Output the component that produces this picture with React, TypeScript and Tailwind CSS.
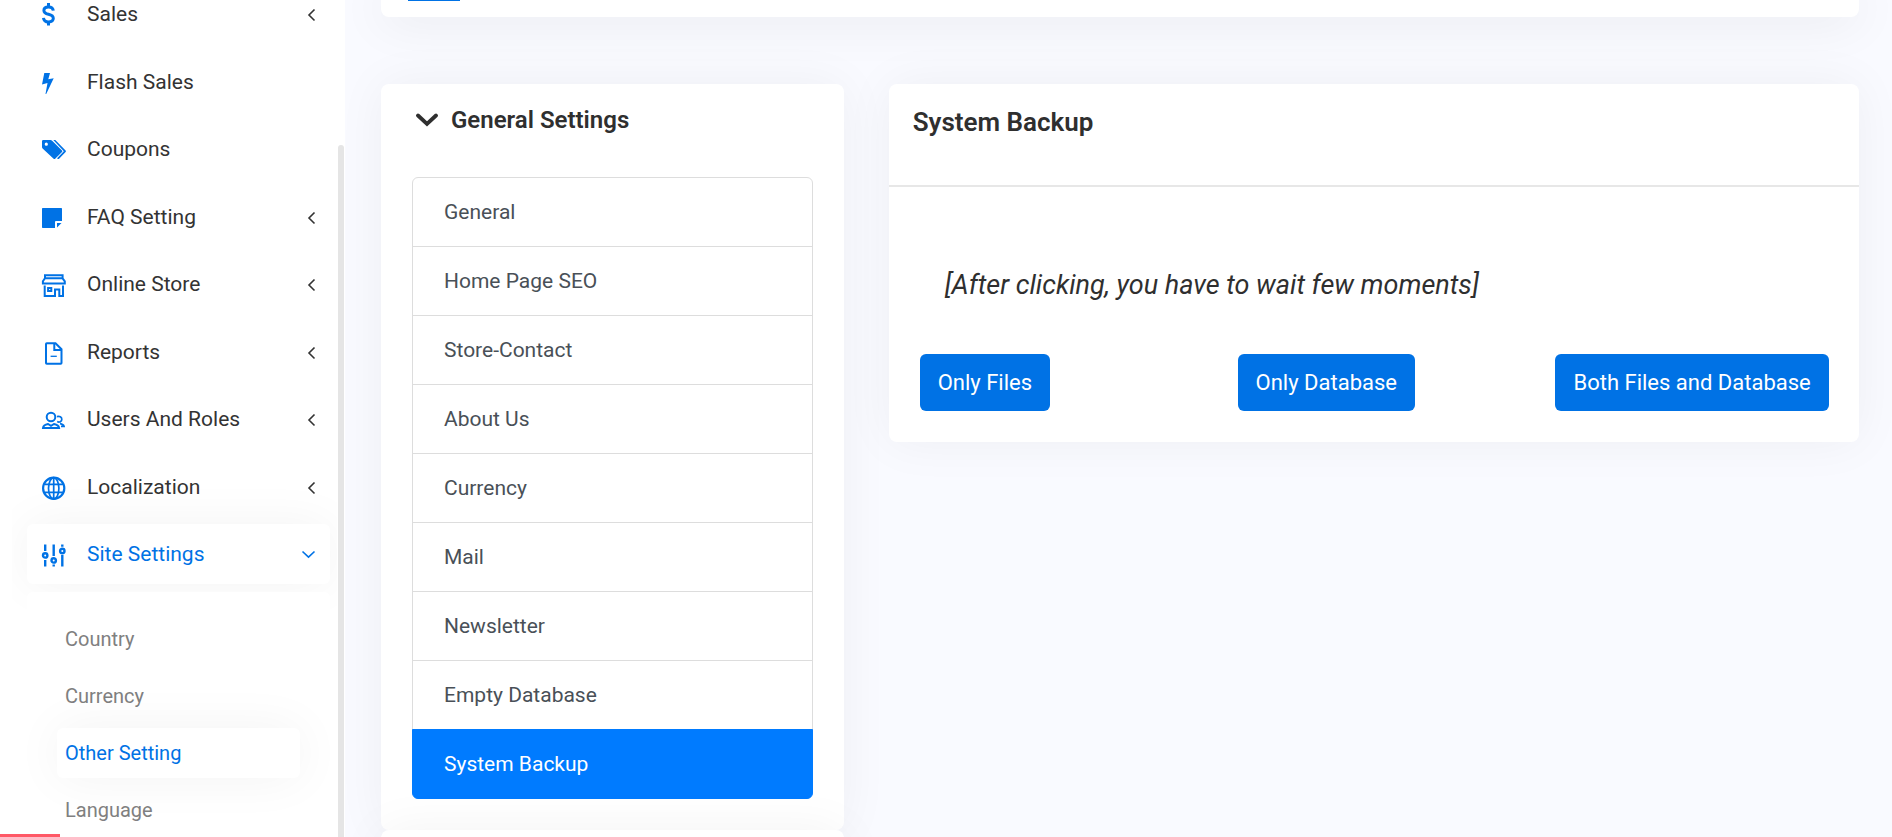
import type { ReactNode } from "react";

const dollar = (
  <>
    <path d="M6.5 1v4M6.5 20v3.5" strokeWidth="3" />
    <path d="M11.3 8.7C11 6 9.200 4.900 6.500 4.900C3.500 4.900 1.900 6.400 1.900 8.500C1.900 11 4 11.700 6.500 12.300C9.300 13 11.300 13.900 11.300 16.300C11.300 18.600 9.500 19.900 6.600 19.900C3.600 19.900 1.700 18.500 1.500 15.800" strokeWidth="3" />
  </>
);
const bolt = <path d="M2.300 3H8L6.300 9.300L11.700 8.200L4.200 24H3.500L5.500 13L0 14.500Z" fill="currentColor" stroke="none" />;
const tags = (
  <g fill="currentColor" stroke="none">
    <path fillRule="evenodd" d="M1.200 3H8.500Q9.300 3 9.900 3.600L20 13.500Q20.800 14.300 20 15.100L13.200 21.700Q12.400 22.400 11.600 21.700L.6 11.500Q0 10.900 0 10V4.200Q0 3 1.200 3ZM4.300 5.600A1.600 1.600 0 1 0 4.300 8.800A1.600 1.600 0 1 0 4.300 5.600Z" />
    <path d="M11.300 3H13.300L23.600 13.500Q24.400 14.300 23.600 15.100L17.100 21.700Q16.300 22.400 15.500 21.700L15.100 21.300L21.800 14.300Z" />
  </g>
);
const note = (
  <g fill="currentColor" stroke="none">
    <path d="M.7 3H19.300Q20 3 20 3.700V16H14Q13 16 13 17V23H.7Q0 23 0 22.300V3.700Q0 3 .7 3Z" />
    <path d="M15 18H19.500L15 22.500Z" />
  </g>
);
const store = (
  <g strokeWidth="2">
    <path d="M3 6.300V3.200H20.600V6.300H3L.9 9.300V11.500H22.800V9.300L20.600 6.300" />
    <path d="M2.700 13.500V23.900H13V17.500H17.300V23.900H21V13.500" />
    <path d="M6.100 15.900H9.300V19H6.100Z" />
  </g>
);
const report = (
  <g strokeWidth="2">
    <path d="M4.800 3.200H13.500L19.500 9.200V23Q19.500 23.800 18.700 23.800H4.800Q4 23.800 4 23V4Q4 3.200 4.800 3.200Z" />
    <path d="M12.300 3.500V10H19.200" />
    <path d="M8.600 16.300H14.800" strokeWidth="1.300" />
  </g>
);
const users = (
  <g strokeWidth="2">
    <circle cx="9" cy="10" r="4.300" />
    <path d="M1 21.100C1.300 18.600 3.500 17.400 6 17L9 18.800L12 17C14.500 17.400 16.800 18.600 17.100 21.100Z" />
    <path d="M15 9.600C17.500 8.700 19.800 10 19.800 12.200C19.800 14.500 17.400 15.700 15.200 14.600M18 16.700C20.500 17.100 21.700 18 22 19.300H19" strokeWidth="1.700" />
  </g>
);
const globe = (
  <g strokeWidth="1.700">
    <circle cx="11.700" cy="13.300" r="10.600" strokeWidth="2.200" />
    <ellipse cx="11.700" cy="13.300" rx="5.200" ry="10.600" />
    <path d="M11.700 2.700V23.900M2.200 9.300H21.200M2.200 17.300H21.200" />
  </g>
);
const sliders = (
  <g strokeWidth="2.400">
    <path d="M3.200 2.500V9M3.200 18V24.500M11.700 2.500V14M11.700 22.500V24.500M20.300 2.500V4.700M20.300 13V24.500" />
    <circle cx="3.200" cy="13.400" r="2.200" />
    <circle cx="11.700" cy="18.400" r="2.200" />
    <circle cx="20.300" cy="9" r="2.200" />
  </g>
);

type Item = { label: string; icon: ReactNode; arrow?: "left" | "down" };

const menu: Item[] = [
  { label: "Sales", icon: dollar, arrow: "left" },
  { label: "Flash Sales", icon: bolt },
  { label: "Coupons", icon: tags },
  { label: "FAQ Setting", icon: note, arrow: "left" },
  { label: "Online Store", icon: store, arrow: "left" },
  { label: "Reports", icon: report, arrow: "left" },
  { label: "Users And Roles", icon: users, arrow: "left" },
  { label: "Localization", icon: globe, arrow: "left" },
  { label: "Site Settings", icon: sliders, arrow: "down" },
];
const submenu = ["Country", "Currency", "Other Setting", "Language"];
const settings = [
  "General",
  "Home Page SEO",
  "Store-Contact",
  "About Us",
  "Currency",
  "Mail",
  "Newsletter",
  "Empty Database",
  "System Backup",
];

function Sidebar() {
  return (
    <aside className="relative w-[345px] shrink-0 overflow-hidden bg-white">
      <nav aria-label="Main" className="-mt-4 ml-3 mr-2 overflow-hidden pl-[15px] pr-[7px]">
        <ul>
          {menu.map(({ label, icon, arrow }) => {
            const open = arrow === "down";
            return (
              <li key={label} className="odd:mb-2 even:mb-[7px]">
                <a
                  href="#"
                  className={`flex h-[60px] items-center rounded-md px-[15px] text-[21px] ${
                    open
                      ? "bg-white text-[#0072e5] shadow-[0_0_50px_rgba(0,0,0,0.05)]"
                      : "text-[#333333]"
                  }`}
                >
                  <svg viewBox="0 0 24 24" fill="none" stroke="currentColor" aria-hidden="true" className={`mr-[21px] size-6 overflow-visible ${open ? "" : "text-[#0072e5]"}`}>
                    {icon}
                  </svg>
                  <span className="flex-1 pt-0.5">{label}</span>
                  {arrow && (
                    <svg viewBox="0 0 12 12" fill="none" stroke="currentColor" strokeWidth="1.600" aria-hidden="true" className="size-3 overflow-visible">
                      <path d={open ? "M-.5 3.500L5.500 9.200L11.500 3.500" : "M11.500 1.500L6 7L11.500 12.500"} />
                    </svg>
                  )}
                </a>
              </li>
            );
          })}
        </ul>
        <ul className="relative flex flex-col gap-[7px] rounded-md bg-white px-[30px] pt-[22px]">
          {submenu.map((label) => (
            <li key={label}>
              <a
                href="#"
                className={`flex h-[50px] items-center rounded-md px-2 text-xl ${
                  label === "Other Setting"
                    ? "bg-white text-[#0072e5] shadow-[0_0_50px_rgba(0,0,0,0.05)]"
                    : "text-[#808080]"
                }`}
              >
                {label}
              </a>
            </li>
          ))}
        </ul>
      </nav>
      <div className="absolute bottom-0 right-px top-[145px] w-1.5 rounded-t-full bg-[#e5e5e5]" />
    </aside>
  );
}

const card = "rounded-lg bg-white shadow-[0_0_50px_rgba(0,0,0,0.05)]";
const button = "whitespace-nowrap rounded-md bg-[#0072e5] px-[18px] py-[14px] text-[22px] leading-[29px] text-white";

export default function App() {
  return (
    <div className="flex h-screen overflow-hidden bg-[#f9faff] font-['Roboto',sans-serif] text-[#2f2f2f]">
      <Sidebar />
      <main className="min-w-0 flex-1 overflow-hidden pl-9 pr-[33px]">
        <header className="rounded-b-lg bg-white px-[27px] pb-4 shadow-[0_0_50px_rgba(0,0,0,0.12)]">
          <div className="h-px w-[52px] bg-[#0072e5]" />
        </header>
        <div className="mt-[67px] grid grid-cols-3 items-start gap-[45px]">
          <div>
            <section className={`${card} px-[31px] pb-[31px] pt-[21px]`}>
              <h2 className="text-2xl font-semibold leading-[30px]">
                <button type="button" className="flex items-center gap-3 pl-1">
                  <svg viewBox="0 0 23 14" fill="none" stroke="currentColor" strokeWidth="3.800" strokeLinecap="round" aria-hidden="true" className="w-[23px]">
                    <path d="M2 2.500L11 11L20 2.500" />
                  </svg>
                  General Settings
                </button>
              </h2>
              <ul className="mt-[42px] pt-px">
                {settings.map((label) => (
                  <li key={label} className="group -mt-px">
                    <a
                      href="#"
                      className={`flex h-[70px] items-center border px-[31px] pt-0.5 text-[21px] group-first:rounded-t-md group-last:rounded-b-md ${
                        label === "System Backup" ? "border-[#007bff] bg-[#007bff] text-white" : "border-[#dddddd] text-[#495057]"
                      }`}
                    >
                      {label}
                    </a>
                  </li>
                ))}
              </ul>
            </section>
            <section className={`${card} h-24`} />
          </div>
          <section className={`${card} col-span-2`}>
            <h2 className="border-b-2 border-[#e7e7e7] px-6 pb-12 pt-[23px] text-[26px] font-semibold leading-[30px]">
              System Backup
            </h2>
            <div className="px-[31px] pb-[31px] pt-20">
              <p className="pl-[25px] text-[27px] italic leading-9">[After clicking, you have to wait few moments]</p>
              <div className="mt-[51px] grid grid-cols-[35%_35%_auto] justify-items-start">
                <button type="button" className={button}>Only Files</button>
                <button type="button" className={button}>Only Database</button>
                <button type="button" className={button}>Both Files and Database</button>
              </div>
            </div>
          </section>
        </div>
      </main>
      <div className="fixed bottom-0 left-0 h-[3px] w-[60px] bg-[#ff5866]" />
    </div>
  );
}
